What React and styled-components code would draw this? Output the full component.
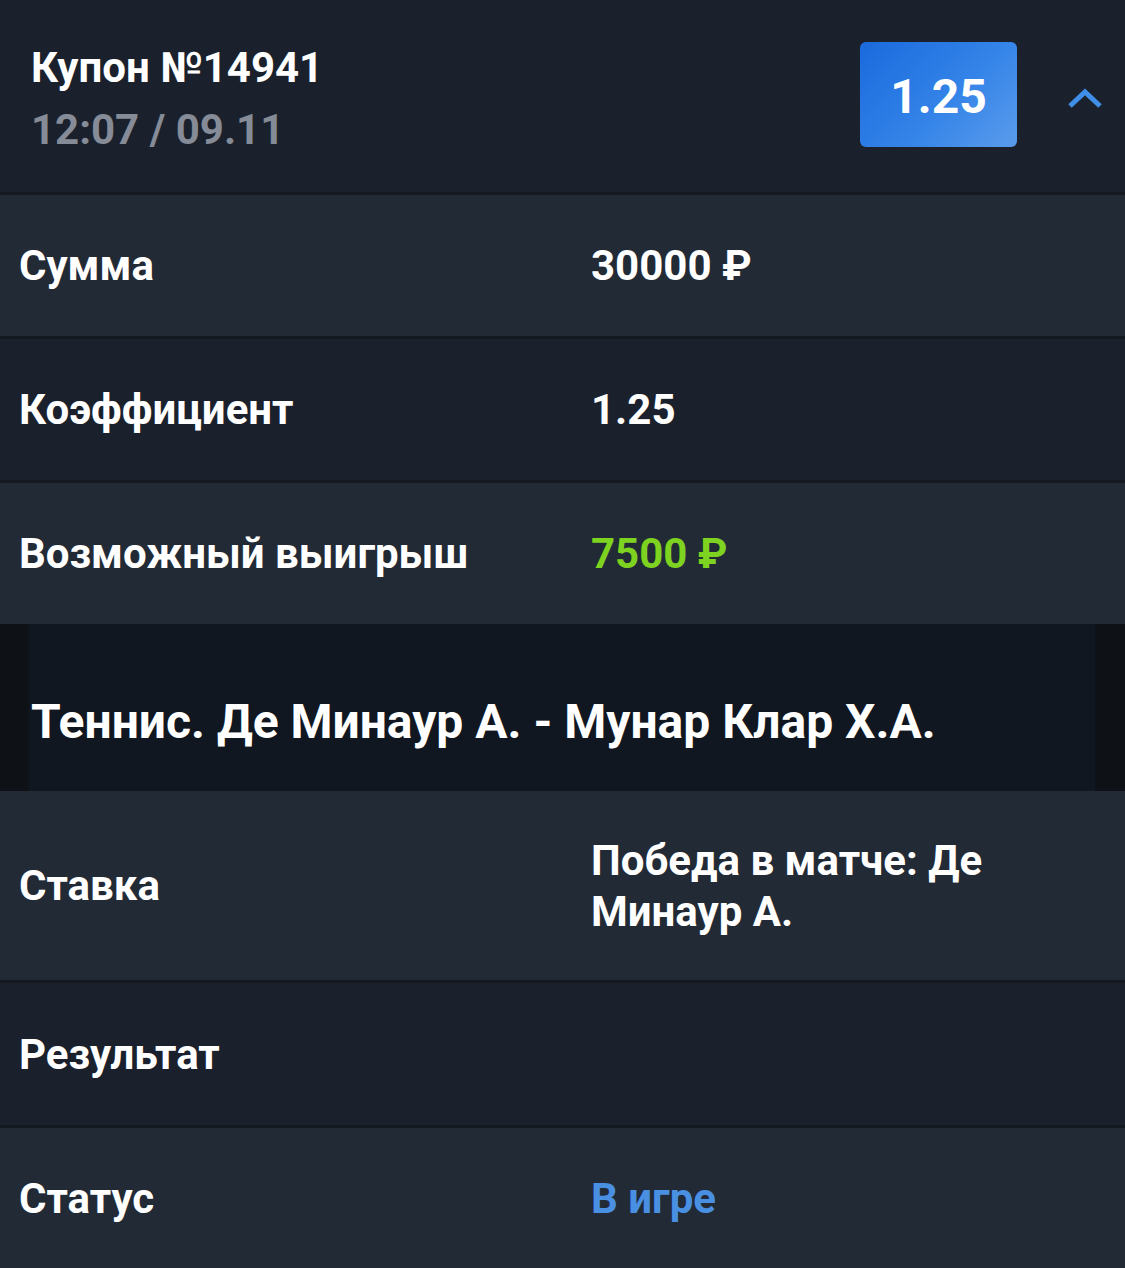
import React from 'react';
import styled, { createGlobalStyle } from 'styled-components';

const GlobalStyle = createGlobalStyle`
  html, body {
    margin: 0;
    padding: 0;
    background: #1b212c;
  }
  body {
    font-family: Roboto, "Noto Sans", "Liberation Sans", sans-serif;
    -webkit-font-smoothing: antialiased;
  }
`;

const Page = styled.div`
  width: 1125px;
  min-height: 1268px;
  background: #222a36;
  display: flex;
  flex-direction: column;
`;

const Header = styled.header`
  height: 192px;
  box-sizing: border-box;
  padding: 0 22px 0 31px;
  display: flex;
  align-items: center;
  background: #1b212c;
`;

const HeadText = styled.div`
  flex: 1;
  display: flex;
  flex-direction: column;
  gap: 8px;
  margin-top: 6px;
`;

const Title = styled.div`
  font-size: 42px;
  font-weight: 700;
  color: #ffffff;
  line-height: 54px;
`;

const Stamp = styled.div`
  font-size: 42px;
  font-weight: 700;
  color: #858b97;
  line-height: 54px;
`;

const OddBadge = styled.div`
  width: 157px;
  height: 105px;
  border-radius: 6px;
  background: linear-gradient(135deg, #1b6ade 0%, #3383e8 55%, #5a9cec 100%);
  color: #fff;
  font-size: 48px;
  font-weight: 700;
  display: flex;
  align-items: center;
  justify-content: center;
  padding-top: 4px;
  box-sizing: border-box;
  margin-right: 50px;
  margin-top: -3px;
`;

const Chevron = styled.svg`
  width: 36px;
  height: 24px;
  margin-top: 4px;
`;

const Row = styled.div`
  display: flex;
  align-items: center;
  height: ${p => p.$h || 144}px;
  box-sizing: border-box;
  padding: 0 19px;
  background: ${p => (p.$alt ? '#1b212c' : '#222a36')};
  border-top: ${p => (p.$flush ? 'none' : '3px solid #141920')};
`;

const Label = styled.div`
  width: 572px;
  flex-shrink: 0;
  font-size: 42px;
  font-weight: 700;
  color: #ffffff;
`;

const Value = styled.div`
  flex: 1;
  font-size: 42px;
  font-weight: 700;
  line-height: 51px;
  color: ${p => p.$color || '#ffffff'};
  padding-right: 110px;
`;

const EventWrap = styled.div`
  background: #0e1116;
  display: flex;
`;

const EventTitle = styled.div`
  flex: 1;
  margin: 0 30px 0 29px;
  height: 167px;
  background: #111720;
  display: flex;
  align-items: center;
  padding-left: 2px;
  padding-top: 28px;
  box-sizing: border-box;
  font-size: 48px;
  font-weight: 700;
  color: #ffffff;
  white-space: nowrap;
`;

const rows = [
  { label: 'Сумма', value: '30000 ₽' },
  { label: 'Коэффициент', value: '1.25', alt: true },
  { label: 'Возможный выигрыш', value: '7500 ₽', color: '#7ed321' },
];

const rows2 = [
  { label: 'Ставка', value: 'Победа в матче: Де Минаур А.', h: 189, flush: true },
  { label: 'Результат', value: '', alt: true, h: 145 },
  { label: 'Статус', value: 'В игре', color: '#4a90e2' },
];

export default function App() {
  return (
    <Page>
      <GlobalStyle />
      <Header>
        <HeadText>
          <Title>Купон №14941</Title>
          <Stamp>12:07 / 09.11</Stamp>
        </HeadText>
        <OddBadge>1.25</OddBadge>
        <Chevron viewBox="0 0 36 24">
          <path d="M3 20 L18 6 L33 20" fill="none" stroke="#3f8fe9" strokeWidth="5" />
        </Chevron>
      </Header>
      {rows.map(r => (
        <Row key={r.label} $alt={r.alt}>
          <Label>{r.label}</Label>
          <Value $color={r.color}>{r.value}</Value>
        </Row>
      ))}
      <EventWrap>
        <EventTitle>Теннис. Де Минаур А. - Мунар Клар Х.А.</EventTitle>
      </EventWrap>
      {rows2.map(r => (
        <Row key={r.label} $alt={r.alt} $h={r.h} $flush={r.flush}>
          <Label>{r.label}</Label>
          <Value $color={r.color}>{r.value}</Value>
        </Row>
      ))}
    </Page>
  );
}
